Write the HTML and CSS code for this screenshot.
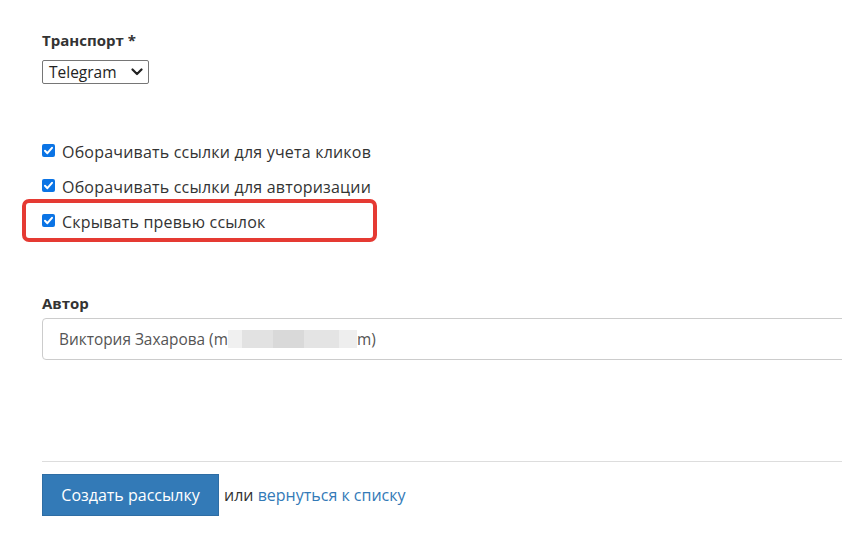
FILE: index.html
```html
<!DOCTYPE html>
<html lang="ru">
<head>
<meta charset="utf-8">
<link rel="stylesheet" href="styles.css">
</head>
<body>
<div class="page">
  <div class="group">
    <label class="label">Транспорт *</label>
    <div class="select">
      <span>Telegram</span>
      <svg class="chev" width="12" height="8" viewBox="0 0 12 8"><path d="M1.5 1.5 L6 6 L10.5 1.5" fill="none" stroke="#222" stroke-width="2.2" stroke-linecap="round" stroke-linejoin="round"/></svg>
    </div>
  </div>

  <div class="checks">
    <div class="check">
      <span class="box"><svg width="13" height="13" viewBox="0 0 13 13"><path d="M3 6.8 L5.4 9.2 L10 3.8" fill="none" stroke="#fff" stroke-width="2" stroke-linecap="round" stroke-linejoin="round"/></svg></span>
      <span>Оборачивать ссылки для учета кликов</span>
    </div>
    <div class="check">
      <span class="box"><svg width="13" height="13" viewBox="0 0 13 13"><path d="M3 6.8 L5.4 9.2 L10 3.8" fill="none" stroke="#fff" stroke-width="2" stroke-linecap="round" stroke-linejoin="round"/></svg></span>
      <span>Оборачивать ссылки для авторизации</span>
    </div>
    <div class="check highlighted">
      <span class="box"><svg width="13" height="13" viewBox="0 0 13 13"><path d="M3 6.8 L5.4 9.2 L10 3.8" fill="none" stroke="#fff" stroke-width="2" stroke-linecap="round" stroke-linejoin="round"/></svg></span>
      <span>Скрывать превью ссылок</span>
      <span class="redbox"></span>
    </div>
  </div>

  <div class="group author">
    <label class="label">Автор</label>
    <div class="input">
      <span>Виктория Захарова (m</span><span class="blur"><i class="b1"></i><i class="b2"></i><i class="b3"></i><i class="b4"></i><i class="b5"></i></span><span>m)</span>
    </div>
  </div>

  <hr class="sep">

  <div class="actions">
    <button class="btn">Создать рассылку</button>
    <span class="or">или <a href="#" class="link">вернуться к списку</a></span>
  </div>
</div>
</body>
</html>
```

FILE: styles.css
```css
html, body {
  margin: 0;
  padding: 0;
  background: #fff;
  overflow: hidden;
}
body {
  font-family: "Open Sans", "Noto Sans", sans-serif;
  color: #333;
  font-size: 15px;
}
.page {
  width: 900px;
  padding: 29px 0 0 42px;
}
.group {
  display: flex;
  flex-direction: column;
  align-items: flex-start;
}
.label {
  font-weight: 700;
  font-size: 15px;
  line-height: 22px;
  margin-bottom: 0;
}
.select {
  margin-top: 9px;
  box-sizing: border-box;
  width: 107px;
  height: 24px;
  border: 1px solid #767676;
  border-radius: 2px;
  display: flex;
  align-items: center;
  justify-content: space-between;
  padding: 0 5px 0 6px;
  font-size: 15.5px;
  color: #222;
}
.chev { display: block; }
.checks {
  margin-top: 57px;
  display: flex;
  flex-direction: column;
  gap: 13px;
}
.check {
  position: relative;
  display: flex;
  align-items: center;
  gap: 7px;
  height: 22px;
  font-size: 16px;
  letter-spacing: 0.2px;
  color: #333;
}
.box {
  width: 13px;
  height: 13px;
  border-radius: 2px;
  background: #0b74e5;
  display: flex;
  margin-top: -4px;
}
.box svg { display: block; }
.redbox {
  position: absolute;
  left: -20px;
  top: -12px;
  width: 355px;
  height: 43px;
  box-sizing: border-box;
  border: 4px solid #e53a33;
  border-radius: 7px;
}
.author {
  margin-top: 58px;
}
.author .label {
  line-height: 24px;
}
.input {
  margin-top: 3px;
  box-sizing: border-box;
  width: 858px;
  height: 42px;
  border: 1px solid #ccc;
  border-radius: 4px;
  display: flex;
  align-items: center;
  padding: 0 16px;
  font-size: 15.4px;
  color: #555;
}
.blur {
  display: flex;
  height: 18px;
}
.blur i { display: block; height: 18px; }
.b1 { width: 14px; background: #f0f0f0; }
.b2 { width: 31px; background: #e2e2e2; }
.b3 { width: 31px; background: #d9d9d9; }
.b4 { width: 35px; background: #e4e4e4; }
.b5 { width: 18px; background: #eeeeee; }
.sep {
  margin: 101px 0 0 0;
  border: 0;
  border-top: 1px solid #ddd;
  width: 858px;
}
.actions {
  margin-top: 12px;
  display: flex;
  align-items: center;
  gap: 5px;
}
.btn {
  width: 177px;
  height: 42px;
  background: #337ab7;
  border: 1px solid #2e6da4;
  color: #fff;
  font-family: inherit;
  font-size: 16px;
  border-radius: 0;
  padding: 0;
}
.or {
  font-size: 16px;
  color: #333;
}
.link {
  color: #337ab7;
  text-decoration: none;
}
```
